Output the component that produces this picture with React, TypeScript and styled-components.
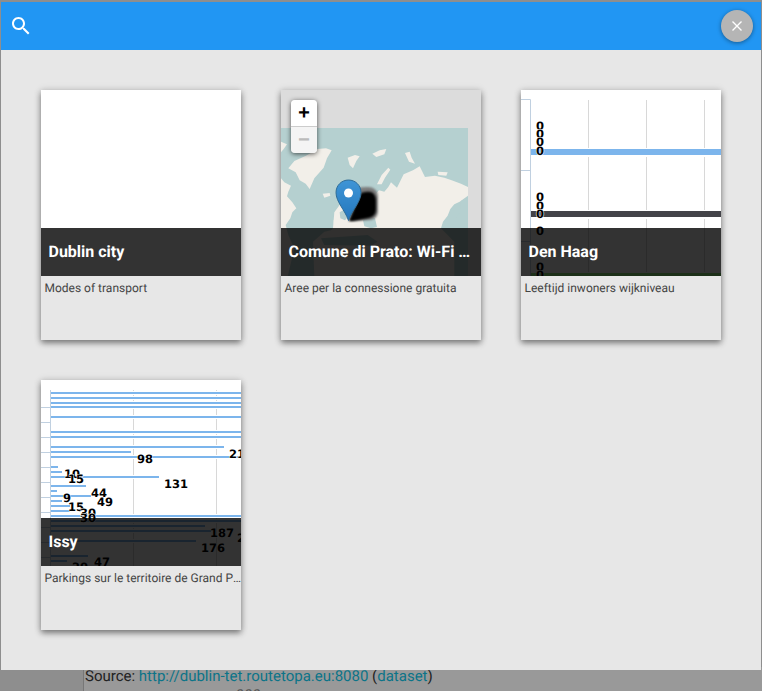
import React, { FC } from "react";
import styled, { createGlobalStyle } from "styled-components";

const GlobalStyle = createGlobalStyle`
  html, body {
    margin: 0;
    padding: 0;
    height: 100%;
    overflow: hidden;
    background: #8e8e8e;
    font-family: Roboto, "Liberation Sans", sans-serif;
    text-rendering: geometricPrecision;
  }
`;

type Label = [number, number, string];

const HAAG_LABELS: Label[] = [
  [19, 40, "0"], [19, 48, "0"], [19, 56, "0"], [19, 65, "0"],
  [19, 111, "0"], [19, 120, "0"], [19, 128, "0"],
  [19, 145, "0"], [19, 181, "0"], [19, 189, "0"],
];

// [y, right edge], no right edge means the bar runs off the card
const ISSY_BARS: [number, number?][] = [
  [12], [17], [22], [26], [36], [51], [56], [66, 183], [71, 90], [76],
  [86, 17], [91, 21], [96, 118], [105, 45], [110, 16], [115, 50], [120, 21],
  [125, 29], [130, 29], [135], [140], [145, 164], [150, 170], [160, 155],
  [175, 47], [180, 26],
];

const ISSY_LABELS: Label[] = [
  [104, 83, "98"], [196, 78, "21"], [31, 98, "10"], [35, 103, "15"], [135, 108, "131"],
  [58, 117, "44"], [26, 122, "9"], [64, 126, "49"], [35, 131, "15"], [47, 137, "30"],
  [47, 142, "30"], [181, 157, "187"], [200, 162, "2"], [172, 172, "176"],
  [61, 186, "47"], [39, 191, "20"],
];

const ChartSvg = styled.svg`
  display: block;
  width: 200px;
  height: 186px;
`;

const ValueLabel = styled.text`
  font-family: "DejaVu Sans", sans-serif;
  font-size: 11.5px;
  font-weight: 700;
  fill: #000;
  stroke: #fff;
  stroke-width: 1px;
  paint-order: stroke;
  text-anchor: middle;
`;

const Labels: FC<{ items: Label[] }> = ({ items }) => (
  <>
    {items.map(([x, y, t], i) => (
      <ValueLabel key={i} x={x} y={y}>
        {t}
      </ValueLabel>
    ))}
  </>
);

const HaagChart = () => (
  <ChartSvg viewBox="0 0 200 186">
    <rect width="200" height="186" fill="#fff" />
    {[67.5, 125.5, 183.5].map((x) => (
      <g key={x} stroke="#d8d8d8">
        <line x1={x} x2={x} y1="10" y2="58" />
        <line x1={x} x2={x} y1="67" y2="120" />
        <line x1={x} x2={x} y1="129" y2="182" />
      </g>
    ))}
    <path d="M0 9.5H9.5V186M0 80.5H9.5M0 151.5H9.5" fill="none" stroke="#c0d0e0" />
    <rect x="10" y="59" width="190" height="6" fill="#7cb5ec" />
    <rect x="10" y="121" width="190" height="6" fill="#434348" />
    <rect x="10" y="183" width="190" height="3" fill="#90ed7d" />
    <Labels items={HAAG_LABELS} />
  </ChartSvg>
);

const IssyChart = () => (
  <ChartSvg viewBox="0 0 200 186">
    <rect width="200" height="186" fill="#fff" />
    {[92.5, 175.5].map((x) => (
      <line key={x} x1={x} x2={x} y1="10" y2="186" stroke="#d8d8d8" />
    ))}
    <path
      d="M9.5 10V186M0 27.5H9.5M0 42.5H9.5M0 57.5H9.5M0 72.5H9.5M0 87.5H9.5M0 102.5H9.5M0 117.5H9.5M0 132.5H9.5M0 147.5H9.5M0 162.5H9.5M0 177.5H9.5"
      fill="none"
      stroke="#c0d0e0"
    />
    {ISSY_BARS.map(([y, end = 200]) => (
      <g key={y}>
        <rect x="10" y={y - 1} width={end - 10} height="4" fill="#fff" />
        <rect x="10" y={y} width={end - 10} height="2" fill="#7cb5ec" />
      </g>
    ))}
    <Labels items={ISSY_LABELS} />
  </ChartSvg>
);

const MapChart = () => (
  <ChartSvg viewBox="0 0 200 186">
    <defs>
      <linearGradient id="pin" x1="0" y1="0" x2="0" y2="1">
        <stop offset="0" stopColor="#3f95d6" />
        <stop offset="1" stopColor="#2477bd" />
      </linearGradient>
      <filter id="soft">
        <feGaussianBlur stdDeviation="1" />
      </filter>
      <clipPath id="tile">
        <rect y="38" width="187" height="148" />
      </clipPath>
    </defs>
    <rect width="200" height="186" fill="#dcdcdc" />
    <rect y="38" width="187" height="148" fill="#b5d0d0" />
    <g clipPath="url(#tile)">
      <g transform="translate(0 35) scale(.3333)" fill="#f2efe9">
        <path d="M22 130L40 108L75 92L110 72L135 70L152 76L138 100L128 128L100 160L86 192L74 176L56 166L44 142Z" />
        <path d="M0 50L18 58L8 72L0 82Z" />
        <path d="M0 160L10 172L30 182L22 200L18 214L34 232L46 250L34 262L28 280L14 300L22 330L40 370L20 455H0Z" />
        <path d="M125 206L146 204L148 212L130 218Z" />
        <path d="M200 98L222 90L236 94L226 108L216 130L206 120Z" />
        <path d="M274 86L296 76L316 72L310 88L286 96Z" />
        <path d="M288 178L302 150L322 128L328 134L312 158L302 178Z" />
        <path d="M372 84L386 80L392 98L402 116L384 110Z" />
        <path d="M470 140L500 142L496 152L472 150Z" />
        <path d="M156 310L160 262L176 240L204 214L240 204L268 206L278 214L294 196L310 200L322 186L330 172L348 188L358 168L368 148L396 136L416 124L432 156L462 152L490 158L512 166L540 176L561 186V212L536 230L520 238L508 252L500 272L486 290L480 310L520 350V455H100L96 350L130 320L150 316Z" />
        <path d="M158 286L172 282L182 302L176 312L160 308Z" />
      </g>
      <g transform="translate(0 35) scale(.3333)" fill="#b5d0d0">
        <path d="M540 228L561 216V330L528 340L514 310L528 276L540 254Z" />
        <path d="M246 286L262 272L282 280L288 306L270 310L250 304Z" />
        <path d="M176 262L196 250L206 270L192 286L178 280Z" />
        <path d="M120 340L260 330L290 350L270 362L130 360Z" />
      </g>
    </g>
    <path
      d="M68 131L76 98Q88 96 92 98Q97 101 97 107V121Q97 128 90 130L72 131Z"
      fill="#7a7a7a"
      filter="url(#soft)"
    />
    <path d="M68 131L80 103Q90 100 93 104Q95 107 95 110V120Q95 126 88 128L72 131Z" fill="#000" filter="url(#soft)" />
    <path
      d="M67.5 130.5C64 120 55 112 55 102.5C55 95.5 60.5 90 67.5 90S80 95.5 80 102.5C80 112 71 120 67.5 130.5Z"
      fill="url(#pin)"
      stroke="#2e6c97"
    />
    <circle cx="67.5" cy="103" r="4.5" fill="#fff" />
  </ChartSvg>
);

const Page = styled.div`
  height: 691px;
  overflow: hidden;
  padding: 667px 0 0 83px;
  box-sizing: border-box;
`;

const SourceBlock = styled.div`
  border-left: 1px solid #777;
  padding-left: 1px;
  height: 24px;
  background: #999999;
  font-size: 15px;
  line-height: 18px;
  color: #222;
`;

const SourceLink = styled.span`
  color: #0c7488;
`;

const ClippedLine = styled.div`
  margin-top: 1px;
  padding-left: 151px;
  color: #555;
`;

const Modal = styled.div`
  position: fixed;
  top: 2px;
  left: 1px;
  width: 760px;
  height: 668px;
  background: #e7e7e7;
  display: flex;
  flex-direction: column;
`;

const Header = styled.header`
  flex: none;
  height: 48px;
  background: #2196f3;
  display: flex;
  align-items: center;
  justify-content: space-between;
  padding: 0 8px;
`;

const SearchIcon = styled.svg`
  width: 24px;
  height: 24px;
  fill: #fff;
`;

const CloseButton = styled.button`
  width: 32px;
  height: 32px;
  padding: 0;
  border: 0;
  border-radius: 50%;
  background: #b5b5b5;
  box-shadow: 0 1px 4px rgba(0, 0, 0, 0.4);
  display: grid;
  place-content: center;
`;

const CardGrid = styled.div`
  display: flex;
  flex-wrap: wrap;
  align-content: flex-start;
  gap: 40px;
  padding: 40px;
`;

const Card = styled.article`
  width: 200px;
  height: 250px;
  background: #e7e7e7;
  box-shadow: 0 3px 6px rgba(0, 0, 0, 0.45), 0 0 8px rgba(0, 0, 0, 0.12);
  overflow: hidden;
`;

const Preview = styled.div`
  position: relative;
  height: 186px;
  overflow: hidden;
  background: #fff;
`;

const Caption = styled.div`
  position: absolute;
  left: 0;
  right: 0;
  bottom: 0;
  height: 48px;
  padding: 0 8px 0 7.5px;
  box-sizing: border-box;
  background: rgba(0, 0, 0, 0.8);
  color: #fff;
  font-size: 16px;
  font-weight: 700;
  line-height: 48px;
  white-space: nowrap;
  overflow: hidden;
  text-overflow: ellipsis;
`;

const Description = styled.p`
  margin: 0;
  padding: 4px 0 0 3.5px;
  font-size: 12px;
  line-height: 16px;
  color: #444;
  white-space: nowrap;
  overflow: hidden;
  text-overflow: ellipsis;
`;

const ZoomControl = styled.div`
  position: absolute;
  top: 10px;
  left: 10px;
  width: 26px;
  border-radius: 4px;
  box-shadow: 0 1px 5px rgba(0, 0, 0, 0.65);
  overflow: hidden;
`;

const ZoomButton = styled.div<{ $disabled?: boolean }>`
  height: 26px;
  background: ${({ $disabled }) => ($disabled ? "#f4f4f4" : "#fff")};
  color: ${({ $disabled }) => ($disabled ? "#bbb" : "#000")};
  border-bottom: ${({ $disabled }) => ($disabled ? "0" : "1px solid #ccc")};
  font-family: "Liberation Mono", monospace;
  font-size: 20px;
  font-weight: 700;
  line-height: 30px;
  text-align: center;
  overflow: hidden;
`;

const cards = [
  { title: "Dublin city", text: "Modes of transport", preview: null },
  { title: "Comune di Prato: Wi-Fi gratuito", text: "Aree per la connessione gratuita", preview: "map" },
  { title: "Den Haag", text: "Leeftijd inwoners wijkniveau", preview: "haag" },
  { title: "Issy", text: "Parkings sur le territoire de Grand Paris Seine Ouest", preview: "issy" },
];

export default function App() {
  return (
    <>
      <GlobalStyle />
      <Page>
        <SourceBlock>
          Source: <SourceLink>http://dublin-tet.routetopa.eu:8080</SourceLink> (
          <SourceLink>dataset</SourceLink>)
          <ClippedLine>000</ClippedLine>
        </SourceBlock>
      </Page>
      <Modal>
        <Header>
          <SearchIcon viewBox="0 0 24 24">
            <path d="M15.5 14h-.79l-.28-.27C15.41 12.59 16 11.11 16 9.5 16 5.91 13.09 3 9.5 3S3 5.91 3 9.5 5.91 16 9.5 16c1.61 0 3.09-.59 4.23-1.57l.27.28v.79l5 4.99L20.49 19l-4.99-5zm-6 0C7.01 14 5 11.99 5 9.5S7.01 5 9.5 5 14 7.01 14 9.5 11.99 14 9.5 14z" />
          </SearchIcon>
          <CloseButton aria-label="Close">
            <svg width="12" height="12" viewBox="0 0 12 12" stroke="#fff" strokeWidth="1.4">
              <path d="M1.5 1.5L10.5 10.5M10.5 1.5L1.5 10.5" />
            </svg>
          </CloseButton>
        </Header>
        <CardGrid>
          {cards.map((c) => (
            <Card key={c.title}>
              <Preview>
                {c.preview === "map" && <MapChart />}
                {c.preview === "haag" && <HaagChart />}
                {c.preview === "issy" && <IssyChart />}
                {c.preview === "map" && (
                  <ZoomControl>
                    <ZoomButton>+</ZoomButton>
                    <ZoomButton $disabled>−</ZoomButton>
                  </ZoomControl>
                )}
                <Caption>{c.title}</Caption>
              </Preview>
              <Description>{c.text}</Description>
            </Card>
          ))}
        </CardGrid>
      </Modal>
    </>
  );
}
